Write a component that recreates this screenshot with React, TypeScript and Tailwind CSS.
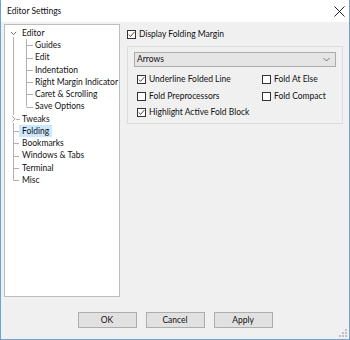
import React from "react";

function Check({ checked }: { checked: boolean }) {
  return (
    <span className="w-[9px] h-[9px] border border-[#333333] bg-white flex items-center justify-center shrink-0">
      {checked && (
        <svg width="7" height="7" viewBox="0 0 7 7">
          <path d="M0.7 3.5 L2.6 5.4 L6.3 1.1" fill="none" stroke="#333" strokeWidth="0.9" />
        </svg>
      )}
    </span>
  );
}

function CheckRow({ label, checked }: { label: string; checked: boolean }) {
  return (
    <div className="flex items-center gap-[3px] h-[16.7px] whitespace-nowrap">
      <Check checked={checked} />
      <span>{label}</span>
    </div>
  );
}

const items: { label: string; level: number; selected?: boolean }[] = [
  { label: "Editor", level: 0 },
  { label: "Guides", level: 1 },
  { label: "Edit", level: 1 },
  { label: "Indentation", level: 1 },
  { label: "Right Margin Indicator", level: 1 },
  { label: "Caret & Scrolling", level: 1 },
  { label: "Save Options", level: 1 },
  { label: "Tweaks", level: 0 },
  { label: "Folding", level: 0, selected: true },
  { label: "Bookmarks", level: 0 },
  { label: "Windows & Tabs", level: 0 },
  { label: "Terminal", level: 0 },
  { label: "Misc", level: 0 },
];

function TreeLines() {
  const c = (i: number) => 8.1 + 12.25 * i;
  const lc = "#b0b0b0";
  return (
    <svg className="absolute left-0 top-0" width="40" height="170" viewBox="0 0 40 170">
      <line x1="8.5" y1={c(0) + 4} x2="8.5" y2={c(12)} stroke={lc} strokeWidth="1" />
      <line x1="21.5" y1={c(0) + 6} x2="21.5" y2={c(6)} stroke={lc} strokeWidth="1" />
      {[1, 2, 3, 4, 5, 6].map((i) => (
        <line key={i} x1="21.5" y1={Math.round(c(i)) + 0.5} x2="28" y2={Math.round(c(i)) + 0.5} stroke={lc} strokeWidth="1" />
      ))}
      {[8, 9, 10, 11, 12].map((i) => (
        <line key={i} x1="8.5" y1={Math.round(c(i)) + 0.5} x2="14" y2={Math.round(c(i)) + 0.5} stroke={lc} strokeWidth="1" />
      ))}
      <rect x="5" y={c(7) - 4} width="6" height="8" fill="white" />
      <line x1="11" y1={Math.round(c(7)) + 0.5} x2="15" y2={Math.round(c(7)) + 0.5} stroke={lc} strokeWidth="1" />
      <rect x="4" y={c(0) - 4} width="9" height="8" fill="white" />
      <polyline points={`5.8,${c(0) - 1.2} 8.5,${c(0) + 1.5} 11.2,${c(0) - 1.2}`} fill="none" stroke="#555" strokeWidth="0.9" />
      <polyline points={`7.3,${c(7) - 2.7} 10,${c(7)} 7.3,${c(7) + 2.7}`} fill="none" stroke="#888" strokeWidth="0.9" />
    </svg>
  );
}

function Btn({ label }: { label: string }) {
  return (
    <div className="w-[59px] h-[16px] border border-[#adadad] bg-[#e1e1e1] flex items-center justify-center">
      {label}
    </div>
  );
}

export default function App() {
  return (
    <div className="w-[350px] h-[340px] flex flex-col border-l border-r border-b border-[#6aa3da] text-[8.5px] text-[#111] font-['Lato',sans-serif] leading-none overflow-hidden">
      <div className="h-[22px] bg-white flex items-center justify-between pl-[6px] pr-[4px] shrink-0">
        <span>Editor Settings</span>
        <svg width="11" height="11" viewBox="0 0 11 11">
          <path d="M0.5 0.5 L10.5 10.5 M10.5 0.5 L0.5 10.5" stroke="#222" strokeWidth="1" />
        </svg>
      </div>
      <div className="flex-1 bg-[#f0f0f0] flex flex-col pt-[2px] pl-[3px] relative">
        <div className="flex gap-[7px]">
          <div className="w-[116px] h-[273px] border border-[#bdbdbd] bg-white relative shrink-0">
            <TreeLines />
            <div className="pt-[2px] relative">
              {items.map((it) => (
                <div
                  key={it.label}
                  className={`h-[12.25px] flex items-center whitespace-nowrap ${it.level === 0 ? "pl-[17px]" : "pl-[30px]"}`}
                >
                  <span className={`h-[12.5px] flex items-center ${it.selected ? "bg-[#cce8ff] px-[3px] -ml-[3px]" : ""}`}>
                    {it.label}
                  </span>
                </div>
              ))}
            </div>
          </div>
          <div className="w-[216px] flex flex-col">
            <div className="mt-[4px] h-[12px] flex items-center gap-[3px]">
              <Check checked={true} />
              <span>Display Folding Margin</span>
            </div>
            <div className="mt-[6px] h-[78px] border border-[#dcdcdc] flex flex-col">
              <div className="mx-[6px] mt-[5px] h-[15px] border border-[#acacac] bg-[#e5e5e5] flex items-center justify-between pl-[2px] pr-[5px]">
                <span>Arrows</span>
                <svg width="7" height="5" viewBox="0 0 7 5">
                  <polyline points="0.5,1 3.5,4 6.5,1" fill="none" stroke="#666" strokeWidth="0.9" />
                </svg>
              </div>
              <div className="mt-[4px] pl-[9px] grid grid-cols-[125px_1fr]">
                <CheckRow label="Underline Folded Line" checked={true} />
                <CheckRow label="Fold At Else" checked={false} />
                <CheckRow label="Fold Preprocessors" checked={false} />
                <CheckRow label="Fold Compact" checked={false} />
                <CheckRow label="Highlight Active Fold Block" checked={true} />
              </div>
            </div>
          </div>
        </div>
        <div className="mt-[15px] flex justify-center gap-[9px] pr-[3px]">
          <Btn label="OK" />
          <Btn label="Cancel" />
          <Btn label="Apply" />
        </div>
        <svg className="absolute right-[2px] bottom-[2px]" width="8" height="8" viewBox="0 0 8 8">
          {[[6, 0], [6, 3], [3, 3], [6, 6], [3, 6], [0, 6]].map(([x, y], i) => (
            <rect key={i} x={x} y={y} width="2" height="2" fill="#c0c0c0" />
          ))}
        </svg>
      </div>
    </div>
  );
}
